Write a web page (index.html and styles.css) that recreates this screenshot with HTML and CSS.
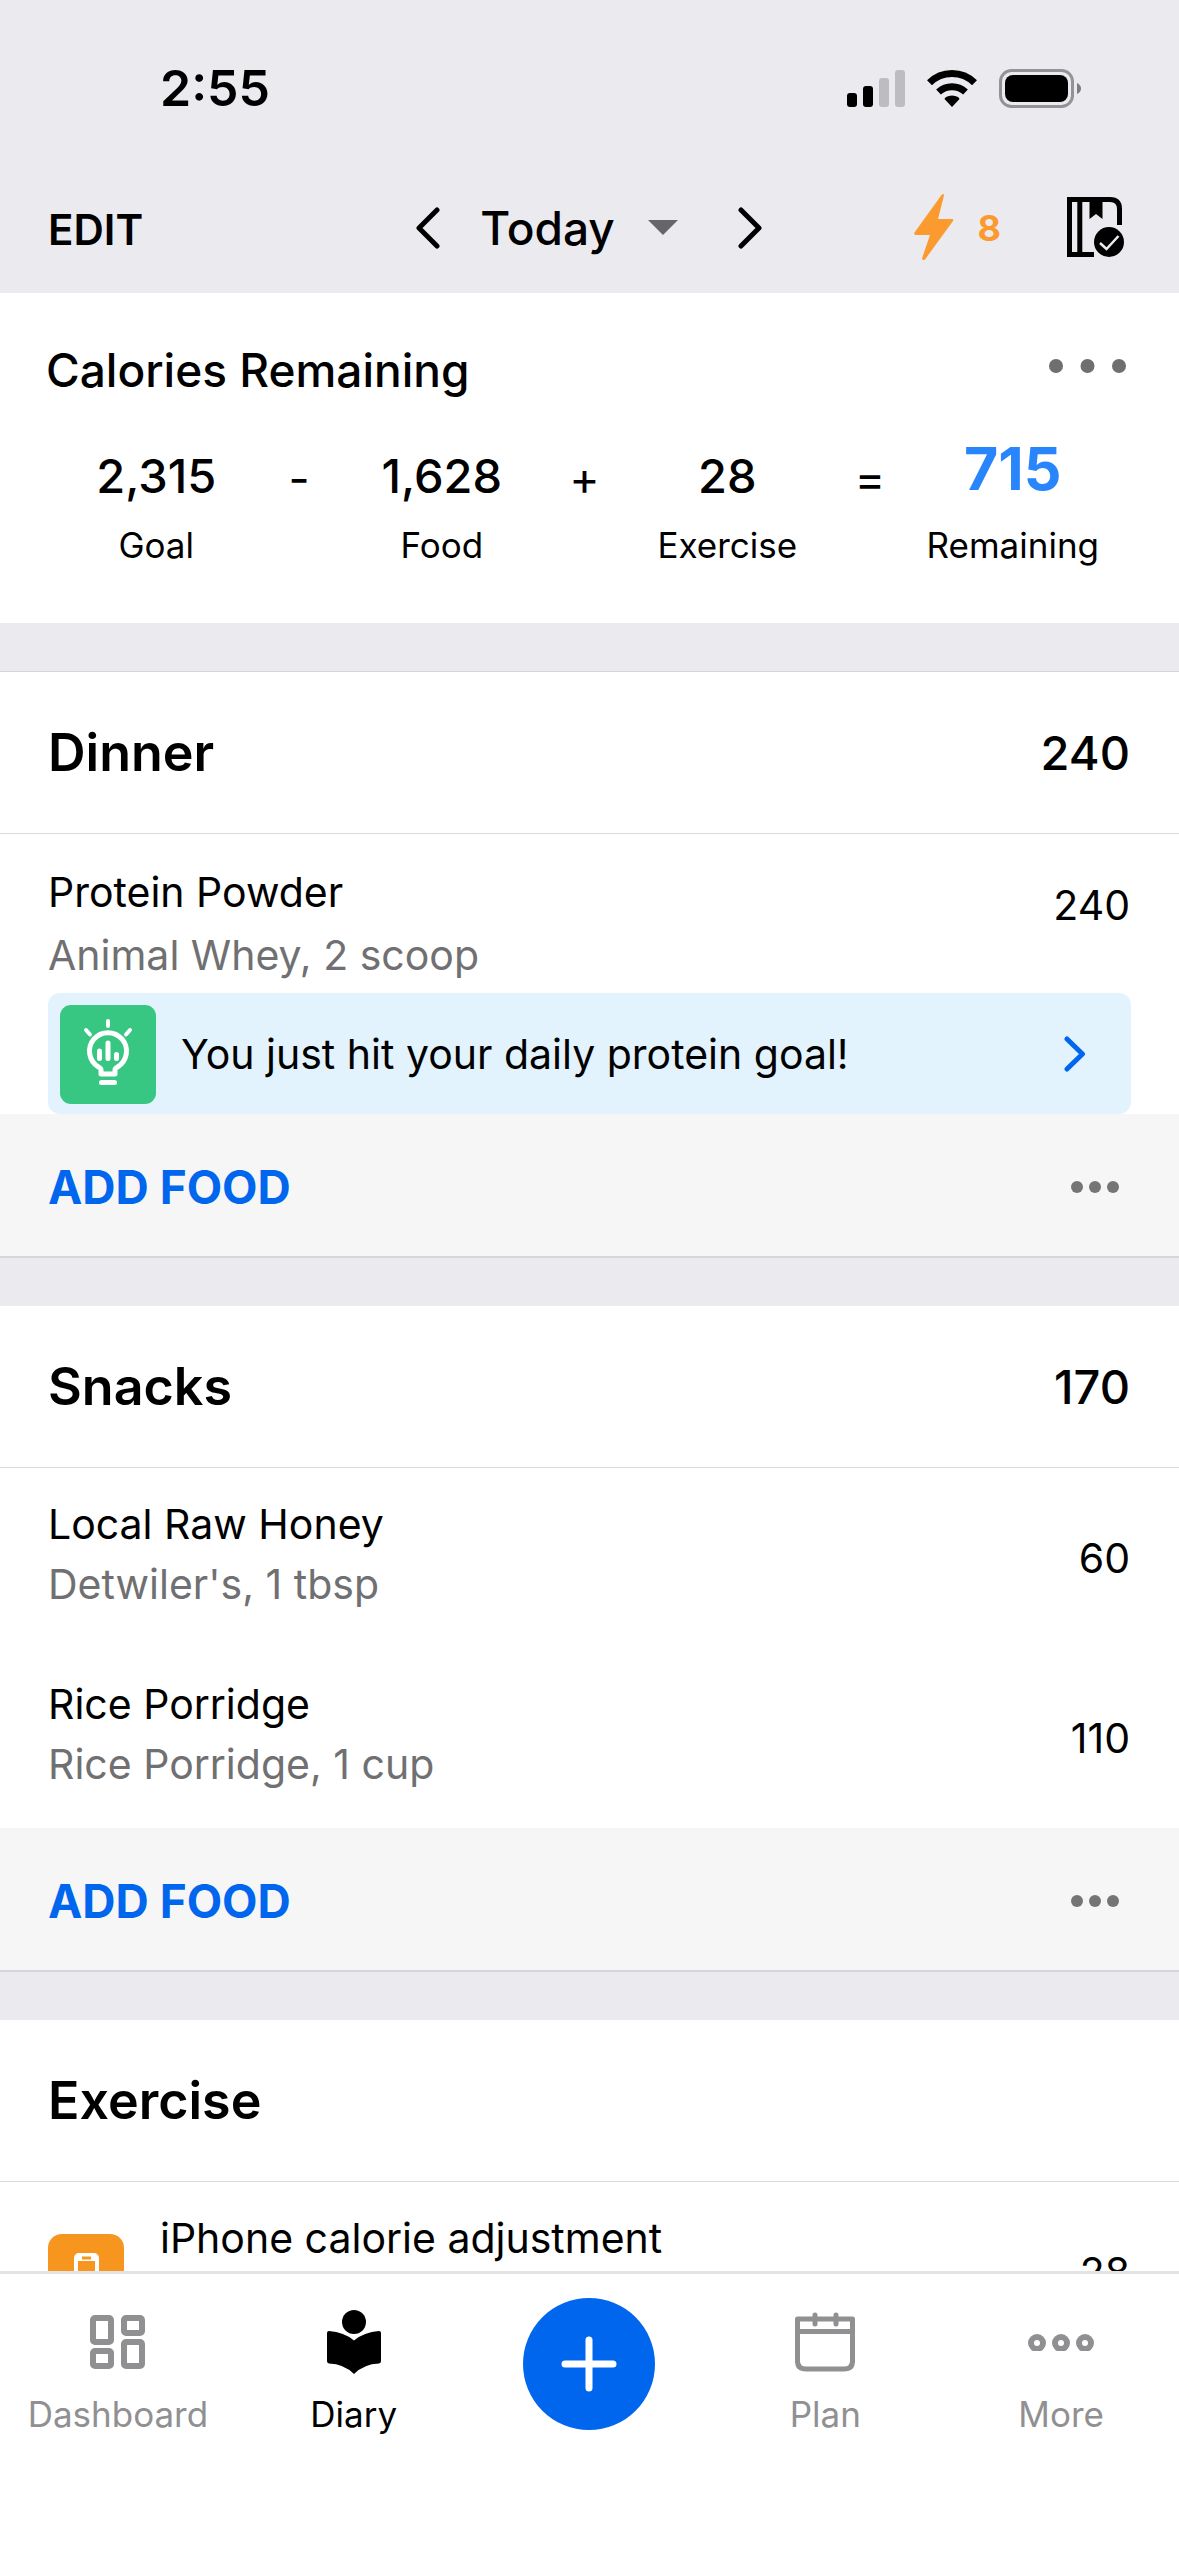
FILE: index.html
```html
<!DOCTYPE html>
<html lang="en">
    <head>
        <meta charset="utf-8">
        <title>Diary</title>
        <meta name="viewport" content="width=device-width, initial-scale=1">
        <link rel="stylesheet" href="styles.css">
    </head>
    <body>
        <header class="top">
            <div class="status-bar">
                <span class="time">2:55</span>
                <div class="status-icons">
                    <svg width="58" height="37" viewBox="0 0 58 37">
                        <rect x="0" y="23" width="10" height="14" rx="3"/>
                        <rect x="16" y="16" width="10" height="21" rx="3"/>
                        <rect x="32" y="8" width="10" height="29" rx="3" fill="#bdbcc1"/>
                        <rect x="48" y="0" width="10" height="37" rx="3" fill="#bdbcc1"/>
                    </svg>
                    <svg width="50" height="37" viewBox="0 0 50 37">
                        <path d="M2.5 12.8A32 32 0 0 1 47.5 12.8M11.5 22A20 20 0 0 1 38.500 22" fill="none" stroke="#000" stroke-width="7"/>
                        <path d="M25 37L17.500 29Q18 26 25 25.500Q32 26 32.500 29Z"/>
                    </svg>
                    <svg width="82" height="39" viewBox="0 0 82 39">
                        <rect x="1.500" y="1.500" width="72" height="36" rx="11" fill="none" stroke="#939297" stroke-width="3"/>
                        <rect x="6" y="6" width="63" height="27" rx="8"/>
                        <path d="M78 14Q82 16 82 19.500T78 25Z" fill="#7e7d82"/>
                    </svg>
                </div>
            </div>
            <div class="nav-bar">
                <button class="edit">EDIT</button>
                <div class="date-picker">
                    <button aria-label="Previous day">
                        <svg width="24" height="42" viewBox="0 0 24 42"><path d="M21 3L3 21L21 39" fill="none" stroke="#000" stroke-width="5" stroke-linecap="round" stroke-linejoin="round"/></svg>
                    </button>
                    <button class="today">
                        Today
                        <svg width="30" height="15" viewBox="0 0 30 15"><path d="M0 0H30L15 15Z" fill="#666668"/></svg>
                    </button>
                    <button aria-label="Next day">
                        <svg width="24" height="42" viewBox="0 0 24 42"><path d="M3 3L21 21L3 39" fill="none" stroke="#000" stroke-width="5" stroke-linecap="round" stroke-linejoin="round"/></svg>
                    </button>
                </div>
                <div class="nav-right">
                    <button class="streak" aria-label="Streak: 8 days">
                        <svg width="40" height="67" viewBox="0 0 40 67"><path d="M27.500 1Q29.500-1 30 1.500L24 25H38Q40 25 39 27L11 65.500Q8.500 67 8 64.500L16 41H1.500Q-.5 40.500.5 38.500Z" fill="#fb9b2f"/></svg>
                        8
                    </button>
                    <button aria-label="Complete diary">
                        <svg width="58" height="62" viewBox="0 0 58 62">
                            <path d="M27 57.500H2.500V2.500H43Q52.500 2.500 52.500 12V28M12.800 2.500V57.500" fill="none" stroke="#000" stroke-width="5"/>
                            <path d="M22.500 3H35.500V22L29 17L22.500 22Z"/>
                            <circle cx="42" cy="45" r="17" fill="#ebeaef"/>
                            <circle cx="42" cy="45" r="15"/>
                            <path d="M33 46L39.500 52L51.500 39" fill="none" stroke="#ebeaef" stroke-width="2.500"/>
                        </svg>
                    </button>
                </div>
            </div>
        </header>

        <main class="diary">
            <section class="summary">
                <div class="summary-head">
                    <h1>Calories Remaining</h1>
                    <button class="more" aria-label="Summary options">
                        <svg width="78" height="14" viewBox="0 0 78 14" fill="#6f6f71"><circle cx="7" cy="7" r="7"/><circle cx="38.500" cy="7" r="7"/><circle cx="70" cy="7" r="7"/></svg>
                    </button>
                </div>
                <div class="equation">
                    <div class="stat"><span class="number">2,315</span><span class="label">Goal</span></div>
                    <span class="operator">-</span>
                    <div class="stat"><span class="number">1,628</span><span class="label">Food</span></div>
                    <span class="operator">+</span>
                    <div class="stat"><span class="number">28</span><span class="label">Exercise</span></div>
                    <span class="operator">=</span>
                    <div class="stat total"><span class="number">715</span><span class="label">Remaining</span></div>
                </div>
            </section>

            <section class="meal dinner">
                <div class="meal-head"><h2>Dinner</h2><span>240</span></div>
                <div class="item with-tip">
                    <div class="item-text">
                        <p>Protein Powder</p>
                        <p class="detail">Animal Whey, 2 scoop</p>
                    </div>
                    <span class="calories">240</span>
                </div>
                <a class="tip" href="#">
                    <svg class="tip-icon" width="96" height="99" viewBox="0 0 96 99" fill="none" stroke="#fff" stroke-linecap="round">
                        <rect width="96" height="99" rx="11" fill="#37c783" stroke="none"/>
                        <path d="M48 16V21M26 25L30 29.500M70 25L66 29.500" stroke-width="4"/>
                        <path d="M41 69H55V65Q55 63 57.500 62A18.500 18.500 0 1 0 38.500 62Q41 63 41 65Z" stroke-width="5" stroke-linejoin="round"/>
                        <path d="M39.500 46V53.500M48 38V53.500M56.500 49.500V53.500M41.500 77.500H54.500" stroke-width="5"/>
                    </svg>
                    <span>You just hit your daily protein goal!</span>
                    <svg width="22" height="36" viewBox="0 0 22 36"><path d="M3 3L18.500 18L3 33" fill="none" stroke="#0066ee" stroke-width="5" stroke-linecap="round" stroke-linejoin="round"/></svg>
                </a>
                <div class="meal-foot">
                    <button class="add">ADD FOOD</button>
                    <button aria-label="Dinner options">
                        <svg width="48" height="12" viewBox="0 0 48 12" fill="#757575"><circle cx="6" cy="6" r="6"/><circle cx="24" cy="6" r="6"/><circle cx="42" cy="6" r="6"/></svg>
                    </button>
                </div>
            </section>

            <section class="meal">
                <div class="meal-head"><h2>Snacks</h2><span>170</span></div>
                <div class="item">
                    <div class="item-text">
                        <p>Local Raw Honey</p>
                        <p class="detail">Detwiler's, 1 tbsp</p>
                    </div>
                    <span class="calories">60</span>
                </div>
                <div class="item">
                    <div class="item-text">
                        <p>Rice Porridge</p>
                        <p class="detail">Rice Porridge, 1 cup</p>
                    </div>
                    <span class="calories">110</span>
                </div>
                <div class="meal-foot">
                    <button class="add">ADD FOOD</button>
                    <button aria-label="Snacks options">
                        <svg width="48" height="12" viewBox="0 0 48 12" fill="#757575"><circle cx="6" cy="6" r="6"/><circle cx="24" cy="6" r="6"/><circle cx="42" cy="6" r="6"/></svg>
                    </button>
                </div>
            </section>

            <section class="meal">
                <div class="meal-head"><h2>Exercise</h2></div>
                <div class="item">
                    <svg class="item-icon" width="76" height="76" viewBox="0 0 76 76">
                        <rect width="76" height="76" rx="14" fill="#f7961e"/>
                        <rect x="28" y="21" width="21" height="38" rx="3" fill="none" stroke="#fff" stroke-width="4"/>
                        <path d="M28 23.500H49" stroke="#fff" stroke-width="7"/>
                        <path d="M34 24H43" stroke="#f7961e" stroke-width="3"/>
                    </svg>
                    <div class="item-text">
                        <p>iPhone calorie adjustment</p>
                        <p class="detail">&nbsp;</p>
                    </div>
                    <span class="calories">28</span>
                </div>
            </section>
        </main>

        <nav class="tabs">
            <a class="tab" href="#">
                <svg width="55" height="54" viewBox="0 0 55 54" fill="none" stroke="#909092" stroke-width="6">
                    <rect x="3" y="3" width="18" height="24" rx="2"/>
                    <rect x="34" y="3" width="18" height="15" rx="2"/>
                    <rect x="3" y="36" width="18" height="15" rx="2"/>
                    <rect x="34" y="27" width="18" height="24" rx="2"/>
                </svg>
                Dashboard
            </a>
            <a class="tab active" href="#">
                <svg width="54" height="64" viewBox="0 0 54 64">
                    <circle cx="27" cy="12" r="12"/>
                    <path d="M0 23Q0 21 2 21Q17 22 27 30.500Q37 22 52 21Q54 21 54 23V51Q54 53 52 53.500Q37 54 27 64Q17 54 2 53.500Q0 53 0 51Z"/>
                </svg>
                Diary
            </a>
            <button class="add-entry" aria-label="Add entry">
                <svg width="56" height="56" viewBox="0 0 56 56"><path d="M28 4V52M4 28H52" stroke="#fff" stroke-width="7" stroke-linecap="round"/></svg>
            </button>
            <a class="tab" href="#">
                <svg width="60" height="60" viewBox="0 0 60 60" fill="none" stroke="#909092">
                    <path d="M2.500 7H57.500V49Q57.500 57 49 57H11Q2.500 57 2.500 49Z" stroke-width="5" stroke-linejoin="round"/>
                    <path d="M3 19.500H57" stroke-width="5"/>
                    <path d="M20 3V12M41 3V12" stroke-width="5" stroke-linecap="round"/>
                </svg>
                Plan
            </a>
            <a class="tab" href="#">
                <svg width="66" height="17" viewBox="0 0 66 17" fill="none" stroke="#909092" stroke-width="6"><circle cx="9" cy="9" r="6"/><circle cx="33" cy="9" r="6"/><circle cx="57" cy="9" r="6"/></svg>
                More
            </a>
        </nav>
    </body>
</html>
```

FILE: styles.css
```css
* {
    box-sizing: border-box;
}

body {
    margin: 0;
    height: 100vh;
    display: flex;
    flex-direction: column;
    background-color: #ebeaef;
    color: #000;
    font-family: Inter, "Liberation Sans", sans-serif;
    font-size: 41px;
    line-height: 60px;
}

h1, h2, p {
    margin: 0;
    font-size: inherit;
}

svg {
    display: block;
    flex: none;
}

button {
    padding: 0;
    border: 0;
    background: none;
    color: inherit;
    font: inherit;
    cursor: pointer;
}

a {
    color: inherit;
    text-decoration: none;
}

/* status bar and date navigation */
.status-bar {
    display: flex;
    justify-content: space-between;
    align-items: center;
    padding: 58px 98px 0 160px;
}

.time {
    font-size: 50px;
    font-weight: 600;
}

.status-icons {
    display: flex;
    align-items: center;
    gap: 22px;
}

.nav-bar {
    display: grid;
    grid-template-columns: 1fr auto 1fr;
    align-items: center;
    height: 175px;
    padding: 76px 54px 32px 48px;
}

.edit {
    justify-self: start;
    padding-top: 4px;
    font-size: 42px;
    font-weight: 600;
}

.date-picker {
    display: flex;
    align-items: center;
    gap: 40px;
    padding-left: 5px;
}

.date-picker button:last-child {
    margin-left: 20px;
}

.today {
    display: flex;
    align-items: center;
    gap: 33px;
    font-size: 46px;
    font-weight: 500;
}

.nav-right, .streak {
    display: flex;
    align-items: center;
}

.nav-right {
    justify-self: end;
    gap: 66px;
}

.streak {
    gap: 24px;
    color: #fb9b2f;
    font-size: 36px;
    font-weight: 700;
}

/* scrolling list */
.diary {
    flex: 1;
    min-height: 0;
    overflow-y: auto;
    scrollbar-width: none;
}

.summary {
    padding: 47px 52px 56px 42px;
    background-color: #fff;
}

.summary-head {
    display: flex;
    justify-content: space-between;
    align-items: center;
    padding-left: 4px;
}

.summary-head h1 {
    font-size: 46px;
    font-weight: 500;
}

.more {
    padding-bottom: 8px;
}

.equation {
    display: grid;
    grid-template-columns: 4fr 1fr 4fr 1fr 4fr 1fr 4fr;
    margin-top: 46px;
    text-align: center;
}

.stat {
    display: flex;
    flex-direction: column;
    gap: 17px;
}

.number {
    font-size: 47px;
    font-weight: 500;
}

.total .number {
    padding-bottom: 14px;
    color: #2985fb;
    font-size: 59px;
    font-weight: 700;
    line-height: 46px;
}

.label {
    font-size: 35px;
    line-height: 44px;
}

.operator {
    font-size: 46px;
    line-height: 64px;
}

.meal {
    margin-top: 48px;
    background-color: #fff;
}

.dinner {
    border-top: 1px solid #d6d6d9;
}

.meal-head {
    display: flex;
    justify-content: space-between;
    align-items: center;
    height: 162px;
    padding: 0 49px 0 48px;
    border-bottom: 1px solid #d9d9db;
    font-size: 47px;
    font-weight: 500;
}

.meal-head h2 {
    font-size: 52px;
    font-weight: 600;
}

.item {
    display: flex;
    align-items: center;
    min-height: 180px;
    padding: 0 49px 0 48px;
}

.item-text {
    flex: 1;
    padding-bottom: 8px;
}

.item-icon {
    margin-right: 36px;
}

.detail {
    color: #707072;
}

.with-tip {
    align-items: flex-start;
    min-height: 159px;
}

.with-tip .item-text {
    padding: 28px 0 0;
}

.with-tip .detail {
    margin-top: 3px;
}

.with-tip .calories {
    line-height: 142px;
}

.tip {
    display: flex;
    align-items: center;
    gap: 25px;
    height: 121px;
    margin: 0 48px;
    padding: 1px 45px 0 12px;
    border-radius: 12px;
    background-color: #e2f3fd;
}

.tip span {
    flex: 1;
}

.meal-foot {
    display: flex;
    justify-content: space-between;
    align-items: center;
    height: 144px;
    padding: 3px 60px 0 48px;
    border-bottom: 2px solid #d5d5da;
    background-color: #f6f6f6;
}

.add {
    color: #0066ee;
    font-size: 46px;
    font-weight: 700;
}

/* bottom tabs */
.tabs {
    display: grid;
    grid-template-columns: repeat(5, 1fr);
    padding: 24px 0 120px;
    border-top: 3px solid #e3e3e4;
    background-color: #fff;
}

.tab {
    display: grid;
    grid-template-rows: 64px 44px;
    gap: 18px;
    place-items: center;
    padding-top: 12px;
    color: #909092;
    font-size: 35px;
    line-height: 44px;
}

.active {
    color: #000;
}

.add-entry {
    display: grid;
    place-items: center;
    justify-self: center;
    width: 132px;
    height: 132px;
    border-radius: 50%;
    background-color: #0066ee;
}
```
